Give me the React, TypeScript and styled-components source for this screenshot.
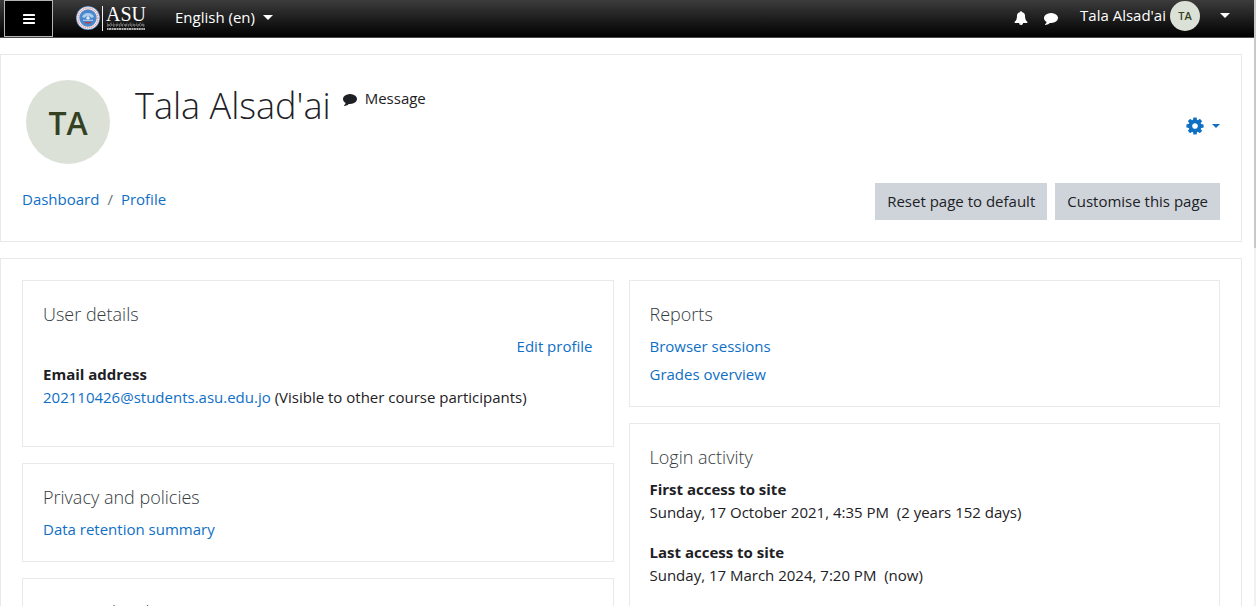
import React from "react";
import styled, { createGlobalStyle } from "styled-components";

const GlobalStyle = createGlobalStyle`
  *, *::before, *::after { box-sizing: border-box; }
  html { height: 100%; overflow: hidden; }
  body {
    margin: 0;
    height: 100%;
    overflow: hidden;
    background: #fff;
    color: #1d2125;
    font-family: "Open Sans", "Noto Sans", sans-serif;
    font-size: 15px;
    line-height: 23px;
  }
  h1, h2, h3, p, ul, ol, dl, dd { margin: 0; padding: 0; }
  ul, ol { list-style: none; }
  button { font: inherit; cursor: pointer; }
`;

const Page = styled.div`
  display: flex;
  align-items: flex-start;
`;

const Main = styled.div`
  flex: 1;
  min-width: 0;
`;

const ScrollTrack = styled.div`
  width: 2px;
  height: 100vh;
  background: #f1f1f1;
`;

const ScrollThumb = styled.div`
  height: 41%;
  background: #c8c8c8;
`;

const Navbar = styled.nav`
  display: flex;
  align-items: center;
  height: 38px;
  padding: 0 24px 2px 4px;
  border-bottom: 1px solid #4a4a4a;
  background: linear-gradient(#3c3c3c, #000);
  color: #fff;
`;

const NavButton = styled.button`
  display: flex;
  align-items: center;
  gap: 8px;
  padding: 0;
  border: 0;
  background: none;
  color: inherit;
`;

const MenuButton = styled(NavButton)`
  align-self: flex-start;
  justify-content: center;
  width: 49px;
  height: 37px;
  border: 1px solid #b4b4b4;
  background: #000;
`;

const Brand = styled.a`
  display: flex;
  margin: 0 29px 0 23px;
`;

const NavTools = styled.div`
  display: flex;
  align-items: center;
  gap: 16px;
  margin-left: auto;
`;

const UserMenu = styled(NavButton)`
  gap: 4px;
  margin: 0 0 4px 6px;
`;

const Avatar = styled.span<{ $size: number; $text: number }>`
  display: flex;
  flex: none;
  align-items: center;
  justify-content: center;
  width: ${(p) => p.$size}px;
  height: ${(p) => p.$size}px;
  border-radius: 50%;
  background: #dbe1d7;
  color: #344123;
  font-size: ${(p) => p.$text}px;
  font-weight: 600;
`;

const Caret = styled.span<{ $gap?: number; $size?: number }>`
  width: 0;
  margin-left: ${(p) => p.$gap ?? 0}px;
  border: ${(p) => p.$size ?? 5}px solid transparent;
  border-top-color: currentColor;
  border-bottom: 0;
`;

const Content = styled.main`
  display: flex;
  flex-direction: column;
  gap: 16px;
  padding: 16px 12px 16px 0;
`;

const Panel = styled.section`
  padding: 21px;
  border: 1px solid #e9e9e9;
`;

const HeaderPanel = styled.header`
  padding: 25px 21px 21px;
  border: 1px solid #e9e9e9;
`;

const Row = styled.div`
  display: flex;
  align-items: center;
  justify-content: space-between;
`;

const Identity = styled.div`
  display: flex;
  align-items: flex-start;
  padding-left: 4px;
`;

const Name = styled.h1`
  margin: 0 12px 0 25px;
  font-size: 36px;
  font-weight: 300;
  line-height: 52px;
`;

const MessageLink = styled.a`
  display: flex;
  align-items: center;
  gap: 8px;
  padding-top: 7px;
  color: inherit;
  text-decoration: none;
`;

const SettingsButton = styled.button`
  display: flex;
  align-items: center;
  gap: 7px;
  margin-top: 8px;
  padding: 0;
  border: 0;
  background: none;
  color: #0f6fc5;
`;

const Actions = styled(Row)`
  margin-top: 19px;
`;

const Crumbs = styled.ol`
  display: flex;
  padding-bottom: 4px;

  li + li::before {
    content: "/";
    padding: 0 8px;
    color: #6a737b;
  }
`;

const Link = styled.a`
  color: #0f6fc5;
  text-decoration: none;
`;

const ButtonGroup = styled.div`
  display: flex;
  gap: 8px;
`;

const Button = styled.button`
  height: 37px;
  padding: 0 12px;
  border: 0;
  background: #ced4da;
  color: #1d2125;
`;

const Columns = styled.div`
  display: grid;
  grid-template-columns: 1fr 1fr;
  align-items: start;
  gap: 15px;
`;

const Column = styled.div`
  display: flex;
  flex-direction: column;
  gap: 16px;
`;

const Card = styled.section`
  padding: 20px;
  border: 1px solid #e9e9e9;
`;

const CardTitle = styled.h3`
  margin-bottom: 8px;
  color: #343a40;
  font-size: 18px;
  font-weight: 300;
  line-height: 26px;
`;

const List = styled.ul`
  display: flex;
  flex-direction: column;
  gap: 5px;
`;

const Entry = styled.li<{ $end?: boolean }>`
  text-align: ${(p) => (p.$end ? "right" : "left")};
`;

const Details = styled.dl`
  margin-bottom: 17px;

  dt { font-weight: 700; }
  dd { white-space: pre-wrap; }
`;

const DetailList = styled(List)`
  gap: 0;
`;

const paths = {
  bell: "M912 1696q0-16-16-16-59 0-101.5-42.5t-42.5-101.5q0-16-16-16t-16 16q0 73 51.5 124.5t124.5 51.5q16 0 16-16zm816-288q0 52-38 90t-90 38h-448q0 106-75 181t-181 75-181-75-75-181h-448q-52 0-90-38t-38-90q50-42 91-88t85-119.5 74.5-158.5 50-206 19.5-260q0-152 117-282.5t307-158.5q-8-19-8-39 0-40 28-68t68-28 68 28 28 68q0 20-8 39 190 28 307 158.5t117 282.5q0 139 19.5 260t50 206 74.5 158.5 85 119.5 91 88z",
  comment:
    "M1792 896q0 174-120 321.5t-326 233-450 85.5q-70 0-145-8-198 175-460 242-49 14-114 22-17 2-30.5-9t-17.5-29v-1q-3-4-.5-12t2-10 4.5-9.5l6-9 7-8.5 8-9q7-8 31-34.5t34.5-38 31-39.5 32.5-51 27-59 26-76q-157-89-247.5-220t-90.5-281q0-130 71-248.5t191-204.5 286-136.5 348-50.5q244 0 450 85.5t326 233 120 321.5z",
  cog: "M1152 896q0-106-75-181t-181-75-181 75-75 181 75 181 181 75 181-75 75-181zm512-109v222q0 12-8 23t-20 13l-185 28q-19 54-39 91 35 50 107 138 10 12 10 25t-9 23q-27 37-99 108t-94 71q-12 0-26-9l-138-108q-44 23-91 38-16 136-29 186-7 28-36 28h-222q-14 0-24.5-8.5t-11.5-21.5l-28-184q-49-16-90-37l-141 107q-10 9-25 9-14 0-25-11-126-114-165-168-7-10-7-23 0-12 8-23 15-21 51-66.5t54-70.5q-27-50-41-99l-183-27q-13-2-21-12.5t-8-23.5v-222q0-12 8-23t19-13l186-28q14-46 39-92-40-57-107-138-10-12-10-24 0-10 9-23 26-36 98.5-107.5t94.5-71.5q13 0 26 10l138 107q44-23 91-38 16-136 29-186 7-28 36-28h222q14 0 24.5 8.5t11.5 21.5l28 184q49 16 90 37l142-107q9-9 24-9 13 0 25 10 129 119 165 170 7 8 7 22 0 12-8 23-15 21-51 66.5t-54 70.5q26 50 41 98l183 28q13 2 21 12.5t8 23.5z",
};

function Icon({ name, size }: { name: keyof typeof paths; size: number }) {
  return (
    <svg width={size} height={size} viewBox="0 0 1792 1792" fill="currentColor" aria-hidden="true">
      <path d={paths[name]} />
    </svg>
  );
}

function BarsIcon() {
  return (
    <svg width="12" height="12" viewBox="0 0 12 12" fill="currentColor" aria-hidden="true">
      <rect y="1" width="12" height="2" rx="0.4" />
      <rect y="5" width="12" height="2" rx="0.4" />
      <rect y="9" width="12" height="2" rx="0.4" />
    </svg>
  );
}

function Logo() {
  return (
    <svg width="70" height="28" viewBox="0 0 70 28" role="img" aria-label="ASU">
      <circle cx="12" cy="14" r="12" fill="#4f8fd0" />
      <circle cx="12" cy="14" r="10" fill="none" stroke="#f4e9ea" strokeWidth="2.6" />
      <circle cx="12" cy="14" r="10" fill="none" stroke="#d0737a" strokeWidth="1" strokeDasharray="1.2 1" />
      <circle cx="12" cy="14" r="7.8" fill="#4a86cc" />
      <path d="M6 13a6.2 5.4 0 0 1 12 0l-2.5 1a3.8 3.4 0 0 0-7 0z" fill="#a9cbed" />
      <circle cx="12" cy="14" r="1.8" fill="#d9e9f8" />
      <path d="M8.5 18h7l-1.2 1.6h-4.6z" fill="#b2434f" />
      <path d="M7 16.3h10" stroke="#dfeaf6" strokeWidth="0.8" />
      <path d="M26.5 2v25" stroke="#f0f0f0" strokeWidth="1" />
      <text x="30" y="17" fill="#fff" fontFamily="Liberation Serif, serif" fontSize="20">
        ASU
      </text>
      <path d="M31 19.2h37" stroke="#8a8a8a" strokeWidth="0.9" strokeDasharray="0.8 2.3 1.6 1.4 0.7 3" />
      <path d="M31 21h38" stroke="#b8b8b8" strokeWidth="1.2" strokeDasharray="3 0.6 1.4 0.5 2.2 0.8" />
      <path d="M31 22.5h38" stroke="#808080" strokeWidth="0.7" strokeDasharray="1.4 1.6 0.8 2.2" />
      <path d="M31 25h38" stroke="#e6e6e6" strokeWidth="1.4" strokeDasharray="1.6 0.4 2.4 0.5" />
    </svg>
  );
}

export default function App() {
  return (
    <>
      <GlobalStyle />
      <Page>
        <Main>
          <Navbar>
            <MenuButton aria-label="Side panel">
              <BarsIcon />
            </MenuButton>
            <Brand href="#" aria-label="Home">
              <Logo />
            </Brand>
            <NavButton>
              English (en)
              <Caret />
            </NavButton>
            <NavTools>
              <NavButton aria-label="Notifications">
                <Icon name="bell" size={14} />
              </NavButton>
              <NavButton aria-label="Messages">
                <Icon name="comment" size={14} />
              </NavButton>
              <UserMenu>
                Tala Alsad'ai
                <Avatar $size={30} $text={11}>TA</Avatar>
                <Caret $gap={16} />
              </UserMenu>
            </NavTools>
          </Navbar>

          <Content>
            <HeaderPanel>
              <Row>
                <Identity>
                  <Avatar $size={84} $text={32}>TA</Avatar>
                  <Name>Tala Alsad'ai</Name>
                  <MessageLink href="#">
                    <Icon name="comment" size={14} />
                    Message
                  </MessageLink>
                </Identity>
                <SettingsButton aria-label="Actions menu">
                  <Icon name="cog" size={20} />
                  <Caret $size={4} />
                </SettingsButton>
              </Row>
              <Actions>
                <nav aria-label="Breadcrumb">
                  <Crumbs>
                    <li><Link href="#">Dashboard</Link></li>
                    <li><Link href="#">Profile</Link></li>
                  </Crumbs>
                </nav>
                <ButtonGroup>
                  <Button>Reset page to default</Button>
                  <Button>Customise this page</Button>
                </ButtonGroup>
              </Actions>
            </HeaderPanel>

            <Panel>
              <Columns>
                <Column>
                  <Card>
                    <CardTitle>User details</CardTitle>
                    <List>
                      <Entry $end><Link href="#">Edit profile</Link></Entry>
                      <Entry>
                        <Details>
                          <dt>Email address</dt>
                          <dd>
                            <Link href="#">202110426@students.asu.edu.jo</Link> (Visible to other course participants)
                          </dd>
                        </Details>
                      </Entry>
                    </List>
                  </Card>
                  <Card>
                    <CardTitle>Privacy and policies</CardTitle>
                    <List>
                      <Entry><Link href="#">Data retention summary</Link></Entry>
                    </List>
                  </Card>
                  <Card>
                    <CardTitle>Course details</CardTitle>
                  </Card>
                </Column>
                <Column>
                  <Card>
                    <CardTitle>Reports</CardTitle>
                    <List>
                      <Entry><Link href="#">Browser sessions</Link></Entry>
                      <Entry><Link href="#">Grades overview</Link></Entry>
                    </List>
                  </Card>
                  <Card>
                    <CardTitle>Login activity</CardTitle>
                    <DetailList>
                      <Entry>
                        <Details>
                          <dt>First access to site</dt>
                          <dd>{"Sunday, 17 October 2021, 4:35 PM  (2 years 152 days)"}</dd>
                        </Details>
                      </Entry>
                      <Entry>
                        <Details>
                          <dt>Last access to site</dt>
                          <dd>{"Sunday, 17 March 2024, 7:20 PM  (now)"}</dd>
                        </Details>
                      </Entry>
                    </DetailList>
                  </Card>
                </Column>
              </Columns>
            </Panel>
          </Content>
        </Main>
        <ScrollTrack>
          <ScrollThumb />
        </ScrollTrack>
      </Page>
    </>
  );
}
